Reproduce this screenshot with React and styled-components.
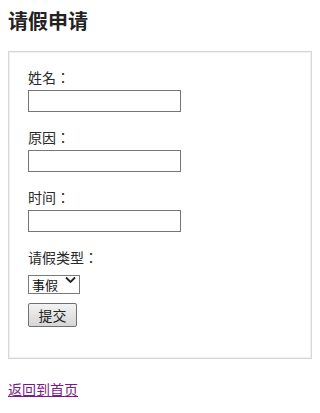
import React from 'react'
import styled, { createGlobalStyle } from 'styled-components'

const GlobalStyle = createGlobalStyle`
  html, body {
    margin: 0;
    padding: 0;
    background: #fff;
  }
  body {
    font-family: "Noto Sans CJK JP", "Noto Sans", sans-serif;
    color: #222;
  }
`

const Page = styled.div`
  padding: 6px 8px 10px 8px;
`

const Title = styled.h2`
  margin: 0;
  font-family: "Noto Sans CJK SC", sans-serif;
  font-size: 20px;
  line-height: 30px;
  font-weight: 700;
  color: #222;
`

const Box = styled.div`
  margin-top: 15px;
  padding: 15px 18px 31px 19px;
  border: 1px solid #d6d6d6;
  box-shadow: inset 1px 1px 0 #f1f1f1, inset -1px -1px 0 #f1f1f1;
  display: flex;
  flex-direction: column;
`

const Field = styled.div`
  display: flex;
  flex-direction: column;
  align-items: flex-start;
  margin-bottom: ${p => p.$gap || 15}px;
`

const Label = styled.label`
  font-family: "Noto Sans CJK JP", sans-serif;
  font-size: 14px;
  line-height: 20px;
  color: #2a2a2a;
  margin-bottom: ${p => p.$gap || 3}px;
`

const TextInput = styled.input`
  box-sizing: border-box;
  width: 153px;
  height: 22px;
  margin: 0;
  padding: 1px 3px;
  border: 1px solid #767676;
  border-radius: 0;
  background: #fff;
  font-size: 13px;
`

const SelectWrap = styled.div`
  position: relative;
  width: 52px;
  height: 19px;
`

const Select = styled.select`
  appearance: none;
  -webkit-appearance: none;
  box-sizing: border-box;
  width: 52px;
  height: 19px;
  margin: 0;
  padding: 0 0 0 3px;
  border: 1px solid #7a7a7a;
  border-radius: 0;
  background: #fff;
  font-family: "Noto Sans CJK SC", sans-serif;
  font-size: 13px;
  line-height: 17px;
  color: #111;
`

const Chevron = styled.svg`
  position: absolute;
  right: 4px;
  top: 5px;
  width: 11px;
  height: 8px;
  pointer-events: none;
`

const SubmitButton = styled.button`
  box-sizing: border-box;
  width: 49px;
  height: 24px;
  margin: 0;
  padding: 0;
  border: 1px solid #707070;
  border-radius: 2px;
  background: linear-gradient(#f3f3f3, #e4e4e4 50%, #d6d6d6);
  font-family: "Noto Sans CJK SC", sans-serif;
  font-size: 14px;
  color: #222;
  align-self: flex-start;
`

const BackLink = styled.a`
  display: inline-block;
  margin-top: 20px;
  font-family: "Noto Sans CJK SC", sans-serif;
  font-size: 14px;
  line-height: 20px;
  color: #7a1a8a;
  text-decoration: underline;
`

const fields = [
  { id: 'name', label: '姓名：' },
  { id: 'reason', label: '原因：' },
  { id: 'time', label: '时间：' },
]

const App = () => {
  return (
    <Page>
      <GlobalStyle />
      <Title>请假申请</Title>
      <Box>
        {fields.map(f => (
          <Field key={f.id}>
            <Label htmlFor={f.id}>{f.label}</Label>
            <TextInput id={f.id} type="text" />
          </Field>
        ))}
        <Field $gap={13}>
          <Label htmlFor="type" $gap={4}>请假类型：</Label>
          <SelectWrap>
            <Select id="type" defaultValue="事假">
              <option>事假</option>
              <option>病假</option>
              <option>年假</option>
            </Select>
            <Chevron viewBox="0 0 11 8">
              <path d="M1 1.5 L5.5 6 L10 1.5" fill="none" stroke="#222" strokeWidth="1.8" />
            </Chevron>
          </SelectWrap>
        </Field>
        <SubmitButton type="button">提交</SubmitButton>
      </Box>
      <BackLink href="#">返回到首页</BackLink>
    </Page>
  )
}

export default App
